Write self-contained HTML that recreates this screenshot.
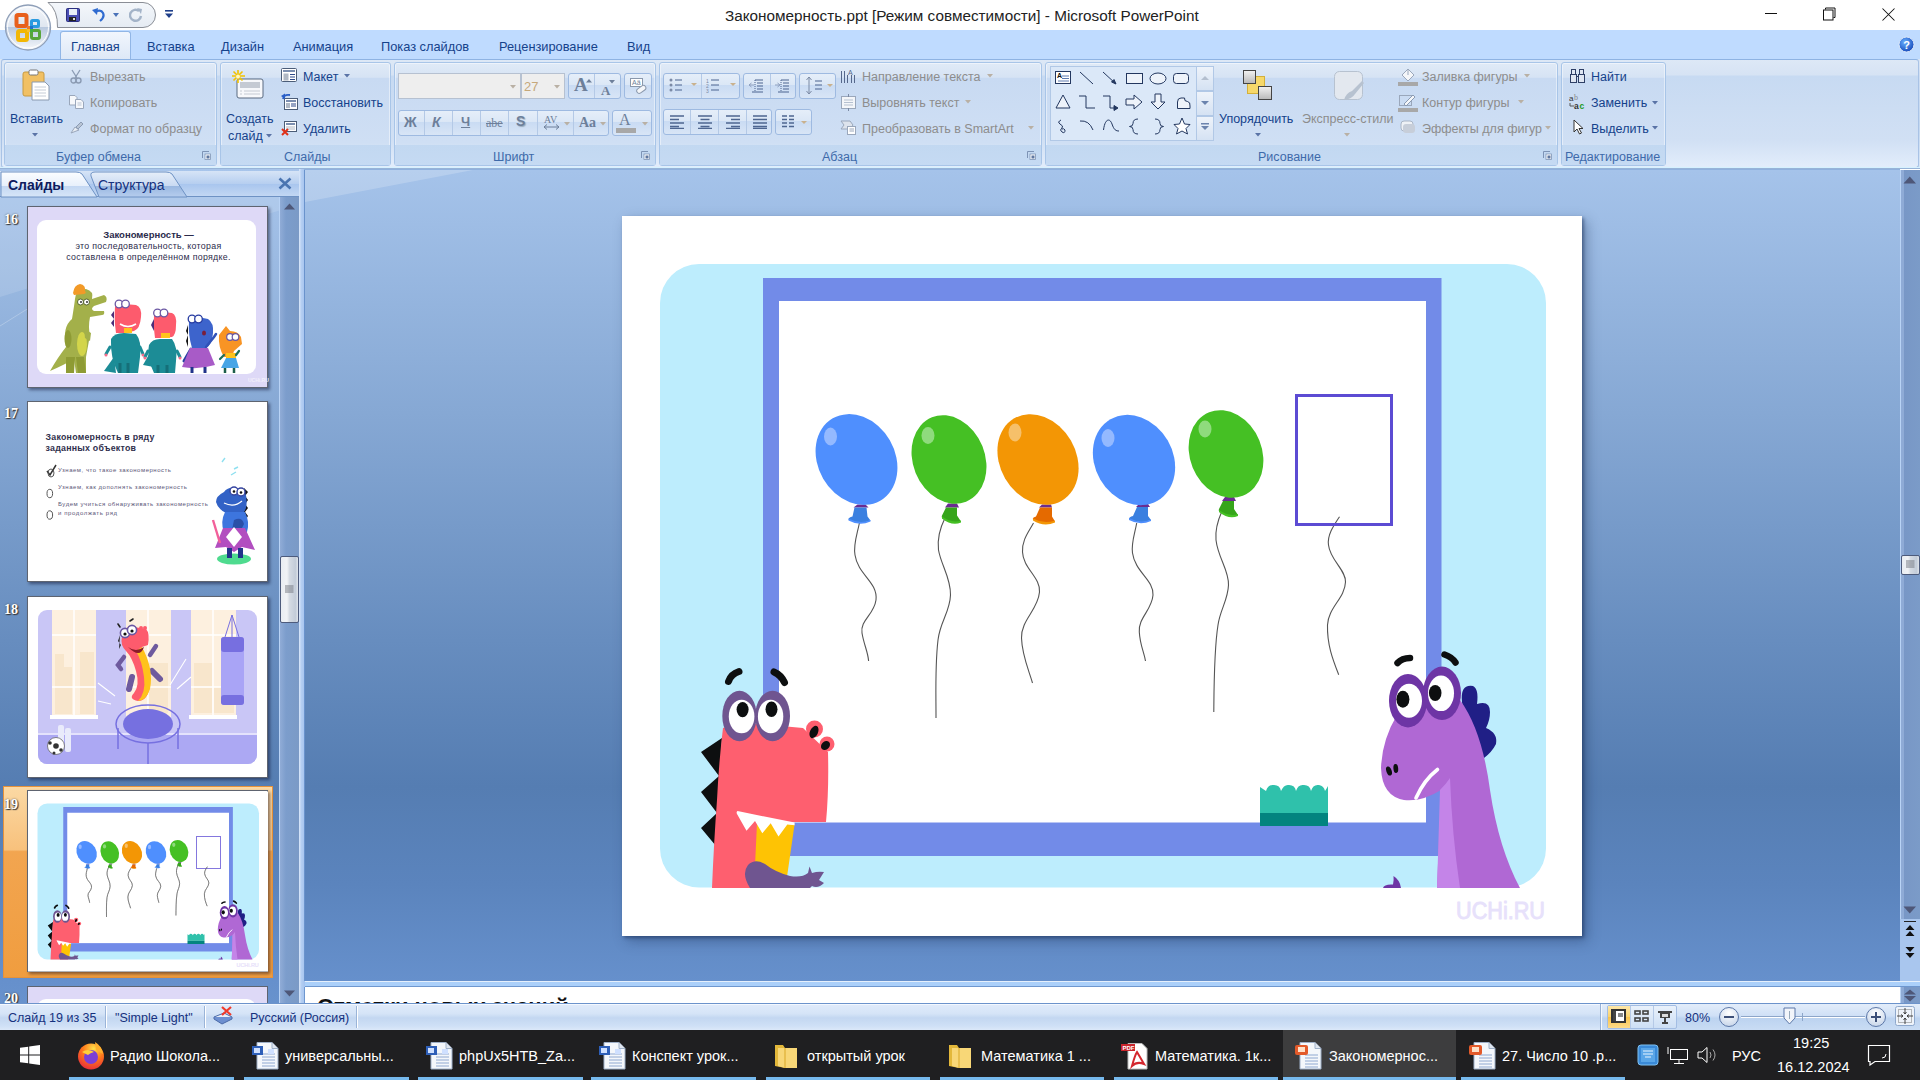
<!DOCTYPE html>
<html><head><meta charset="utf-8">
<style>
*{margin:0;padding:0;box-sizing:border-box}
html,body{width:1920px;height:1080px;overflow:hidden;background:#fff;font-family:"Liberation Sans",sans-serif}
.a{position:absolute}
.t{white-space:nowrap;line-height:17px}
.tab{font-size:12.8px;color:#15428b;top:38px}
.grp{top:62px;height:104px;border:1px solid #a8c5e8;border-radius:3px;background:linear-gradient(180deg,#e0eaf7 0,#d6e3f4 14%,#c8daf2 15%,#cfdff4 78%,#e4eefb 100%);box-shadow:inset 0 0 0 1px rgba(255,255,255,.45)}
.grp .lbl{position:absolute;left:0;right:0;bottom:0;height:20px;background:linear-gradient(#c2d8f1,#c5daf3)}
.gl{font-size:12.5px;color:#3e6aaa;padding-top:1px}
.bt{font-size:12.5px;color:#15428b;padding-top:1px}
.dt{font-size:12.5px;color:#8d8d8d;padding-top:1px}
.ar path{fill:#5a73a6}
.arg path{fill:#b9b0a4}
.strip{border:1px solid #9ebae1;border-radius:3px;background:linear-gradient(180deg,#e5eef9 0,#dbe7f6 45%,#c9dbf3 46%,#d8e5f6 100%)}
.sep{width:1px;background:#b4c9e6}
.fi{color:#6d7f9a}
.num{font-family:"Liberation Serif",serif;font-weight:bold;font-size:14px;color:#fff;text-shadow:1px 1px 1px #333,0 0 2px #555}
.thumb{border:1px solid #5e6470;box-shadow:2px 2px 3px rgba(0,0,30,.45)}
.st{font-size:12.5px;color:#15317e}
.sbsep{top:1006px;width:2px;height:22px;border-left:1px solid #9ab4d8;border-right:1px solid #fff}
.tbu{top:1077px;height:3px;background:#76b9ed}
.tbt{top:1048px;font-size:14.5px;color:#fff;line-height:17px}
</style></head><body>
<!-- TITLE BAR -->
<div class="a" style="left:0;top:0;width:1920px;height:30px;background:#fff"></div>
<!-- QAT pill -->
<svg class="a" style="left:0;top:0" width="200" height="30"><defs><linearGradient id="qg" x1="0" y1="0" x2="0" y2="1"><stop offset="0" stop-color="#f4f7fb"/><stop offset="1" stop-color="#e5ebf3"/></linearGradient></defs><path d="M48 2.5 H143 A12.5 12.5 0 0 1 143 27.5 H57.5 Q58 10 48 2.5Z" fill="url(#qg)" stroke="#8a8e96"/></svg>
<!-- save -->
<svg class="a" style="left:66px;top:8px" width="14" height="14"><rect x="0.5" y="0.5" width="13" height="13" rx="1" fill="#4a4fb5" stroke="#2b2f7e"/><rect x="3" y="1" width="8" height="6" fill="#e8eef8"/><rect x="3" y="9" width="7" height="4" fill="#222"/><rect x="7" y="10" width="2" height="2" fill="#ddd"/></svg>
<!-- undo -->
<svg class="a" style="left:92px;top:7px" width="14" height="16"><path d="M3 5 Q9 2 11 6 Q13 10 8 14" fill="none" stroke="#2f6bd0" stroke-width="2.2"/><path d="M0 3 L6 1 L5 8 Z" fill="#2f6bd0"/></svg>
<svg class="a" style="left:113px;top:13px" width="7" height="4"><path d="M0 0 H6 L3 4Z" fill="#4a72b8"/></svg>
<!-- redo disabled -->
<svg class="a" style="left:129px;top:8px" width="14" height="14"><path d="M10 3 A5.5 5.5 0 1 0 12 8" fill="none" stroke="#a3b3c8" stroke-width="2.4"/><path d="M8 0 L13 1 L12 6Z" fill="#a3b3c8"/></svg>
<!-- customize -->
<svg class="a" style="left:164px;top:10px" width="10" height="10"><rect x="1" y="0" width="8" height="1.6" fill="#1f3f8a"/><path d="M1 3.5 H9 L5 8Z" fill="#1f3f8a"/></svg>
<div class="a t" style="left:725px;top:7px;font-size:15.3px;color:#222">Закономерность.ppt [Режим совместимости] - Microsoft PowerPoint</div>
<!-- window controls -->
<div class="a" style="left:1765px;top:13px;width:12px;height:1px;background:#111"></div>
<svg class="a" style="left:1821px;top:6px" width="16" height="16"><rect x="2.5" y="4" width="9.5" height="10" fill="none" stroke="#111"/><path d="M4.5 3.5 V2 H14 V11.5 H12.5" fill="none" stroke="#111"/></svg>
<svg class="a" style="left:1881px;top:7px" width="16" height="16"><path d="M1.5 1.5 L13.5 13.5 M13.5 1.5 L1.5 13.5" stroke="#111" stroke-width="1.05"/></svg>
<!-- TABS ROW -->
<div class="a" style="left:0;top:30px;width:1920px;height:30px;background:#bfdbff"></div>
<div class="a" style="left:60px;top:31px;width:71px;height:30px;background:linear-gradient(#f1f6fd,#dce7f6);border:1px solid #91b6e6;border-bottom:none;border-radius:3px 3px 0 0"></div>
<div class="a t tab" style="left:71px;top:38px">Главная</div>
<div class="a t tab" style="left:147px;top:38px">Вставка</div>
<div class="a t tab" style="left:221px;top:38px">Дизайн</div>
<div class="a t tab" style="left:293px;top:38px">Анимация</div>
<div class="a t tab" style="left:381px;top:38px">Показ слайдов</div>
<div class="a t tab" style="left:499px;top:38px">Рецензирование</div>
<div class="a t tab" style="left:627px;top:38px">Вид</div>
<svg class="a" style="left:1898px;top:36px" width="17" height="17"><defs><radialGradient id="hg" cx="40%" cy="35%" r="70%"><stop offset="0" stop-color="#6ab0ff"/><stop offset="1" stop-color="#1346b8"/></radialGradient></defs><circle cx="8.5" cy="8.5" r="7.5" fill="url(#hg)" stroke="#dde8f8"/><text x="8.5" y="12.5" font-size="11" font-weight="bold" text-anchor="middle" fill="#fff" font-family="Liberation Sans">?</text></svg>
<!-- OFFICE BUTTON -->
<svg class="a" style="left:3px;top:3px" width="50" height="50">
<defs><linearGradient id="ob" x1="0" y1="0" x2="0" y2="1"><stop offset="0" stop-color="#f4f7fb"/><stop offset=".48" stop-color="#dfe6f0"/><stop offset=".5" stop-color="#b9c9df"/><stop offset="1" stop-color="#f7f9fc"/></linearGradient></defs>
<circle cx="25" cy="24.5" r="22.5" fill="url(#ob)" stroke="#8f9fb8" stroke-width="1.3"/>
<circle cx="25" cy="24.5" r="20.5" fill="none" stroke="#fff" stroke-width="1"/>
<rect x="13.5" y="12" width="10" height="11" rx="1.5" fill="none" stroke="#e8601c" stroke-width="4"/>
<rect x="28.5" y="17.5" width="7" height="6" rx="1" fill="none" stroke="#2b9be0" stroke-width="3"/>
<rect x="15" y="28" width="9" height="9" rx="1.5" fill="none" stroke="#f2b705" stroke-width="4"/>
<rect x="28.5" y="27.5" width="8" height="8" rx="1.5" fill="none" stroke="#58a53a" stroke-width="3"/>
<rect x="24" y="23" width="3" height="3" fill="#f07a2a"/><rect x="27" y="23" width="3" height="3" fill="#2070d0"/><rect x="24" y="26" width="3" height="3" fill="#f5c030"/><rect x="27" y="26" width="3" height="3" fill="#40b040"/>
</svg>
<!-- RIBBON -->
<div class="a" style="left:0;top:59px;width:1920px;height:110px;background:linear-gradient(#dbe6f5,#d0def2 15%,#c4d8f0 60%,#d9e6f6 100%)"></div>
<div class="a" style="left:1px;top:59px;width:1918px;height:109px;border:1px solid #a9c3e6;border-top-color:#8eb3e3;border-radius:3px;background:linear-gradient(180deg,#dde8f6 0,#d6e3f4 14%,#c7daf2 15%,#d1e0f4 75%,#e2edfb 100%)"></div>
<div class="a" style="left:0;top:167px;width:1920px;height:1px;background:#d5f1ff"></div>
<div class="a" style="left:0;top:168px;width:1920px;height:1px;background:#98b3d7"></div>
<!-- groups -->
<div class="a grp" style="left:4px;width:213px"><div class="lbl"></div></div>
<div class="a grp" style="left:220px;width:171px"><div class="lbl"></div></div>
<div class="a grp" style="left:394px;width:262px"><div class="lbl"></div></div>
<div class="a grp" style="left:659px;width:383px"><div class="lbl"></div></div>
<div class="a grp" style="left:1045px;width:513px"><div class="lbl"></div></div>
<div class="a grp" style="left:1561px;width:105px"><div class="lbl"></div></div>
<div class="a t gl" style="left:56px;top:148px">Буфер обмена</div>
<div class="a t gl" style="left:284px;top:148px">Слайды</div>
<div class="a t gl" style="left:493px;top:148px">Шрифт</div>
<div class="a t gl" style="left:822px;top:148px">Абзац</div>
<div class="a t gl" style="left:1258px;top:148px">Рисование</div>
<div class="a t gl" style="left:1565px;top:148px">Редактирование</div>
<!-- launchers -->
<svg class="a" style="left:202px;top:151px" width="9" height="9"><path d="M0.5 7 V0.5 H7" fill="none" stroke="#7d93b5"/><rect x="3" y="3" width="5.5" height="5.5" fill="#fff" stroke="#7d93b5" stroke-width=".8"/><rect x="4.5" y="4.5" width="3" height="3" fill="#5f77a0"/></svg>
<svg class="a" style="left:641px;top:151px" width="9" height="9"><path d="M0.5 7 V0.5 H7" fill="none" stroke="#7d93b5"/><rect x="3" y="3" width="5.5" height="5.5" fill="#fff" stroke="#7d93b5" stroke-width=".8"/><rect x="4.5" y="4.5" width="3" height="3" fill="#5f77a0"/></svg>
<svg class="a" style="left:1027px;top:151px" width="9" height="9"><path d="M0.5 7 V0.5 H7" fill="none" stroke="#7d93b5"/><rect x="3" y="3" width="5.5" height="5.5" fill="#fff" stroke="#7d93b5" stroke-width=".8"/><rect x="4.5" y="4.5" width="3" height="3" fill="#5f77a0"/></svg>
<svg class="a" style="left:1543px;top:151px" width="9" height="9"><path d="M0.5 7 V0.5 H7" fill="none" stroke="#7d93b5"/><rect x="3" y="3" width="5.5" height="5.5" fill="#fff" stroke="#7d93b5" stroke-width=".8"/><rect x="4.5" y="4.5" width="3" height="3" fill="#5f77a0"/></svg>

<!-- CLIPBOARD -->
<svg class="a" style="left:22px;top:69px" width="28" height="33"><rect x="1" y="3" width="21" height="24" rx="2" fill="#f1c063" stroke="#c89a40"/><rect x="7" y="1" width="9" height="5" rx="1.5" fill="#fff" stroke="#777"/><path d="M10 13 H23 L27 17 V31 H10 Z" fill="#fff" stroke="#8a9ab0"/><path d="M12.5 18 H24 M12.5 21 H24 M12.5 24 H24 M12.5 27 H24" stroke="#c5ccd6"/></svg>
<div class="a t bt" style="left:10px;top:110px">Вставить</div>
<svg class="a ar" style="left:32px;top:133px" width="6" height="4"><path d="M0 0 H6 L3 3.5Z"/></svg>
<svg class="a" style="left:70px;top:69px" width="12" height="15"><path d="M2 1 L7 9 M10 1 L5 9" stroke="#8b9bb3" stroke-width="1.3"/><circle cx="3.5" cy="11.5" r="2.5" fill="none" stroke="#8b9bb3" stroke-width="1.4"/><circle cx="8.5" cy="11.5" r="2.5" fill="none" stroke="#8b9bb3" stroke-width="1.4"/></svg>
<div class="a t dt" style="left:90px;top:68px">Вырезать</div>
<svg class="a" style="left:69px;top:95px" width="16" height="14"><path d="M0.5 0.5 H6 L8 2.5 V10 H0.5Z" fill="#f6f8fb" stroke="#9aa7bb"/><path d="M6.5 4.5 H12 L14.5 7 V13.5 H6.5Z" fill="#f6f8fb" stroke="#9aa7bb"/><path d="M8.5 8 H12.5 M8.5 10 H12.5" stroke="#b9c3d2"/></svg>
<div class="a t dt" style="left:90px;top:94px">Копировать</div>
<svg class="a" style="left:69px;top:120px" width="16" height="15"><path d="M2 13 L6 7 L10 10 Z" fill="#e8edf3" stroke="#9aa7bb"/><path d="M7 7 L12 2 L14 4 L9 9Z" fill="#b8c4d4" stroke="#8b9bb3"/></svg>
<div class="a t dt" style="left:90px;top:120px">Формат по образцу</div>

<!-- SLIDES -->
<svg class="a" style="left:232px;top:70px" width="34" height="30"><rect x="5" y="9" width="26" height="19" rx="2" fill="#f7f8fb" stroke="#5a6a80"/><rect x="8" y="12" width="20" height="6" fill="#c5cad3"/><path d="M8 21 H10 M12 21 H28 M8 24 H10 M12 24 H28" stroke="#c5cad3"/><g stroke="#f1c100" stroke-width="1.6"><path d="M6 0 V13 M0 6 H13 M1.5 1.5 L10.5 10.5 M10.5 1.5 L1.5 10.5"/></g><circle cx="6" cy="6.5" r="2" fill="#fff8c0"/></svg>
<div class="a t bt" style="left:226px;top:110px">Создать</div>
<div class="a t bt" style="left:228px;top:127px">слайд</div>
<svg class="a ar" style="left:266px;top:134px" width="6" height="4"><path d="M0 0 H6 L3 3.5Z"/></svg>
<svg class="a" style="left:281px;top:68px" width="17" height="15"><rect x="0.5" y="0.5" width="15" height="13" rx="1" fill="#fff" stroke="#4b5d78"/><rect x="2" y="2" width="12" height="2" fill="#7c8fb0"/><rect x="2.5" y="5.5" width="5" height="7" fill="#b0b8c4"/><path d="M9 6.5 H14 M9 9 H14 M9 11.5 H14" stroke="#2f4b8a" stroke-width="1.2"/></svg>
<div class="a t bt" style="left:303px;top:68px">Макет</div>
<svg class="a ar" style="left:344px;top:74px" width="6" height="4"><path d="M0 0 H6 L3 3.5Z"/></svg>
<svg class="a" style="left:281px;top:93px" width="18" height="18"><rect x="3.5" y="5.5" width="13" height="11" fill="#fff" stroke="#4b5d78"/><rect x="5" y="7" width="10" height="2" fill="#7c8fb0"/><rect x="5" y="10" width="4" height="5" fill="#b0b8c4"/><path d="M10 11 H15 M10 13 H15" stroke="#2f4b8a"/><path d="M2 6 Q3 1 9 2" fill="none" stroke="#2a5fc8" stroke-width="1.8"/><path d="M0 3 L4 0.5 L4 6Z" fill="#2a5fc8"/></svg>
<div class="a t bt" style="left:303px;top:94px">Восстановить</div>
<svg class="a" style="left:281px;top:120px" width="17" height="16"><rect x="3.5" y="1.5" width="12" height="10" fill="#fff" stroke="#4b5d78"/><rect x="5" y="3" width="9" height="2" fill="#7c8fb0"/><path d="M5 7 H14 M5 9 H14" stroke="#b0b8c4"/><path d="M1 9 L7 15 M7 9 L1 15" stroke="#e03018" stroke-width="2"/></svg>
<div class="a t bt" style="left:303px;top:120px">Удалить</div>

<!-- FONT -->
<div class="a" style="left:398px;top:73px;width:123px;height:26px;background:#eeeeee;border:1px solid #b6c1d1"></div>
<svg class="a arg" style="left:510px;top:85px" width="6" height="4"><path d="M0 0 H6 L3 3.5Z"/></svg>
<div class="a" style="left:521px;top:73px;width:44px;height:26px;background:#eeeeee;border:1px solid #b6c1d1"></div>
<div class="a t" style="left:524px;top:78px;font-size:13px;color:#c6a87a">27</div>
<svg class="a arg" style="left:554px;top:85px" width="6" height="4"><path d="M0 0 H6 L3 3.5Z"/></svg>
<div class="a strip" style="left:568px;top:73px;width:53px;height:26px"></div>
<div class="a sep" style="left:594px;top:74px;height:24px"></div>
<div class="a t" style="left:574px;top:76px;font-family:'Liberation Serif';font-size:19px;color:#6d7f9a;font-weight:bold">A</div>
<svg class="a" style="left:586px;top:79px" width="6" height="4"><path d="M0 3.5 H6 L3 0Z" fill="#6d7f9a"/></svg>
<div class="a t" style="left:601px;top:82px;font-family:'Liberation Serif';font-size:13px;color:#6d7f9a;font-weight:bold">A</div>
<svg class="a" style="left:609px;top:80px" width="6" height="4"><path d="M0 0 H6 L3 3.5Z" fill="#6d7f9a"/></svg>
<div class="a strip" style="left:624px;top:73px;width:28px;height:26px"></div>
<svg class="a" style="left:630px;top:77px" width="18" height="18"><rect x="0.5" y="1.5" width="12" height="8" fill="#fff" stroke="#8a98ac"/><text x="2" y="8" font-size="7" fill="#6d7f9a" font-family="Liberation Sans">Aä</text><rect x="6" y="10" width="10" height="5" rx="2.5" transform="rotate(-35 11 12)" fill="#f4f6f9" stroke="#8a98ac"/></svg>
<div class="a strip" style="left:398px;top:110px;width:211px;height:26px"></div>
<div class="a sep" style="left:424px;top:111px;height:24px"></div>
<div class="a sep" style="left:452px;top:111px;height:24px"></div>
<div class="a sep" style="left:480px;top:111px;height:24px"></div>
<div class="a sep" style="left:508px;top:111px;height:24px"></div>
<div class="a sep" style="left:537px;top:111px;height:24px"></div>
<div class="a sep" style="left:573px;top:111px;height:24px"></div>
<div class="a t fi" style="left:404px;top:114px;font-weight:bold;font-size:14px">Ж</div>
<div class="a t fi" style="left:432px;top:114px;font-weight:bold;font-style:italic;font-size:14px">К</div>
<div class="a t fi" style="left:461px;top:113px;font-weight:bold;font-size:13px;text-decoration:underline">Ч</div>
<div class="a t fi" style="left:486px;top:115px;font-size:12px;text-decoration:line-through;font-family:'Liberation Serif'">abe</div>
<div class="a t fi" style="left:516px;top:113px;font-weight:bold;font-size:14px;text-shadow:1px 1px 1px #9ab">S</div>
<div class="a t fi" style="left:544px;top:111px;font-size:10px;font-family:'Liberation Serif'">AV</div>
<svg class="a" style="left:543px;top:124px" width="17" height="6"><path d="M1 3 H16 M1 3 L4 0.5 M1 3 L4 5.5 M16 3 L13 0.5 M16 3 L13 5.5" stroke="#6d7f9a" fill="none"/></svg>
<svg class="a arg" style="left:564px;top:122px" width="6" height="4"><path d="M0 0 H6 L3 3.5Z"/></svg>
<div class="a t fi" style="left:579px;top:114px;font-size:14px;font-family:'Liberation Serif';font-weight:bold">Aa</div>
<svg class="a arg" style="left:600px;top:122px" width="6" height="4"><path d="M0 0 H6 L3 3.5Z"/></svg>
<div class="a strip" style="left:612px;top:110px;width:40px;height:26px"></div>
<div class="a t fi" style="left:619px;top:111px;font-size:16px;font-family:'Liberation Serif'">A</div>
<div class="a" style="left:616px;top:128px;width:20px;height:5px;background:#a8a8a8"></div>
<svg class="a arg" style="left:642px;top:122px" width="6" height="4"><path d="M0 0 H6 L3 3.5Z"/></svg>

<!-- PARAGRAPH -->
<div class="a strip" style="left:663px;top:73px;width:77px;height:26px"></div>
<div class="a sep" style="left:701px;top:74px;height:24px"></div>
<svg class="a" style="left:669px;top:78px" width="30" height="16"><g fill="#7b8aa5"><circle cx="2" cy="2" r="1.5"/><circle cx="2" cy="7" r="1.5"/><circle cx="2" cy="12" r="1.5"/></g><path d="M6 2 H13 M6 7 H13 M6 12 H13" stroke="#4d6590" stroke-width="1.2"/><path d="M22 5 H28 L25 8Z" fill="#c9b18e"/></svg>
<svg class="a" style="left:706px;top:78px" width="30" height="16"><text x="0" y="5" font-size="5" fill="#7b8aa5">1</text><text x="0" y="10" font-size="5" fill="#7b8aa5">2</text><text x="0" y="15" font-size="5" fill="#7b8aa5">3</text><path d="M5 2 H13 M5 7 H13 M5 12 H13" stroke="#4d6590" stroke-width="1.2"/><path d="M24 5 H30 L27 8Z" fill="#c9b18e"/></svg>
<div class="a strip" style="left:743px;top:73px;width:53px;height:26px"></div>
<div class="a sep" style="left:770px;top:74px;height:24px"></div>
<svg class="a" style="left:748px;top:78px" width="18" height="16"><path d="M7 2 H15 M9 5 H15 M9 8 H15 M9 11 H15 M4 14 H15" stroke="#4d6590" stroke-width="1.2"/><path d="M7 2 V14" stroke="#4d6590" stroke-dasharray="1 1"/><path d="M1 7 H6 M1 7 L3.5 5 M1 7 L3.5 9" stroke="#8ea0c0" fill="none"/></svg>
<svg class="a" style="left:774px;top:78px" width="18" height="16"><path d="M7 2 H15 M9 5 H15 M9 8 H15 M9 11 H15 M4 14 H15" stroke="#4d6590" stroke-width="1.2"/><path d="M7 2 V14" stroke="#4d6590" stroke-dasharray="1 1"/><path d="M1 7 H6 M6 7 L3.5 5 M6 7 L3.5 9" stroke="#8ea0c0" fill="none"/></svg>
<div class="a strip" style="left:799px;top:73px;width:37px;height:26px"></div>
<svg class="a" style="left:806px;top:76px" width="28" height="20"><path d="M3 1 V18 M3 1 L0.5 4 M3 1 L5.5 4 M3 18 L0.5 15 M3 18 L5.5 15" stroke="#7b8aa5" fill="none"/><path d="M9 5 H16 M9 9 H16 M9 13 H16" stroke="#4d6590" stroke-width="1.2"/><path d="M21 8 H27 L24 11Z" fill="#c9b18e"/></svg>
<div class="a strip" style="left:663px;top:109px;width:109px;height:26px"></div>
<div class="a sep" style="left:690px;top:110px;height:24px"></div>
<div class="a sep" style="left:718px;top:110px;height:24px"></div>
<div class="a sep" style="left:746px;top:110px;height:24px"></div>
<svg class="a" style="left:669px;top:115px" width="16" height="14"><path d="M1 1 H15 M1 4.5 H10 M1 8 H15 M1 11.5 H10 M1 13.5 H15" stroke="#4d6590" stroke-width="1.3"/></svg>
<svg class="a" style="left:697px;top:115px" width="16" height="14"><path d="M1 1 H15 M3.5 4.5 H12.5 M1 8 H15 M3.5 11.5 H12.5 M1 13.5 H15" stroke="#4d6590" stroke-width="1.3"/></svg>
<svg class="a" style="left:725px;top:115px" width="16" height="14"><path d="M1 1 H15 M6 4.5 H15 M1 8 H15 M6 11.5 H15 M1 13.5 H15" stroke="#4d6590" stroke-width="1.3"/></svg>
<svg class="a" style="left:752px;top:115px" width="16" height="14"><path d="M1 1 H15 M1 4.5 H15 M1 8 H15 M1 11.5 H15 M1 13.5 H15" stroke="#4d6590" stroke-width="1.3"/></svg>
<div class="a strip" style="left:775px;top:109px;width:37px;height:26px"></div>
<svg class="a" style="left:781px;top:115px" width="28" height="14"><path d="M1 1 H6 M1 4.5 H6 M1 8 H6 M1 11.5 H6 M8 1 H13 M8 4.5 H13 M8 8 H13 M8 11.5 H13" stroke="#4d6590" stroke-width="1.4"/><path d="M20 6 H26 L23 9Z" fill="#c9b18e"/></svg>
<svg class="a" style="left:840px;top:68px" width="17" height="16"><path d="M1.5 3 V15 M4.5 3 V15 M7.5 7 V15 M11.5 7 V15 M14.5 7 V15" stroke="#55678a"/><text x="8" y="7" font-size="7" fill="#55678a">A</text></svg>
<div class="a t dt" style="left:862px;top:68px">Направление текста</div>
<svg class="a arg" style="left:987px;top:74px" width="6" height="4"><path d="M0 0 H6 L3 3.5Z"/></svg>
<svg class="a" style="left:840px;top:94px" width="17" height="17"><rect x="1.5" y="2.5" width="14" height="12" fill="#f4f6f9" stroke="#9aa7bb"/><path d="M4 6 H13 M4 8.5 H13 M4 11 H13" stroke="#b5c0d0"/><path d="M8.5 0 V3 M8.5 14 V17" stroke="#7b8aa5"/></svg>
<div class="a t dt" style="left:862px;top:94px">Выровнять текст</div>
<svg class="a arg" style="left:965px;top:100px" width="6" height="4"><path d="M0 0 H6 L3 3.5Z"/></svg>
<svg class="a" style="left:840px;top:119px" width="17" height="17"><path d="M1 2 H10 L13 6 L10 10 H1 L4 6Z" fill="#dde3ec" stroke="#9aa7bb"/><rect x="7.5" y="7.5" width="8" height="8" fill="#fff" stroke="#9aa7bb"/><path d="M9.5 10 H14 M9.5 12 H14" stroke="#9aa7bb"/></svg>
<div class="a t dt" style="left:862px;top:120px">Преобразовать в SmartArt</div>
<svg class="a arg" style="left:1028px;top:126px" width="6" height="4"><path d="M0 0 H6 L3 3.5Z"/></svg>

<!-- DRAWING -->
<div class="a" style="left:1050px;top:66px;width:147px;height:75px;background:#dbe8f8;border:1px solid #b1c8e6"></div>
<div class="a" style="left:1196px;top:66px;width:18px;height:25px;background:linear-gradient(#eef3fa,#d5e2f3);border:1px solid #b1c8e6"></div>
<div class="a" style="left:1196px;top:91px;width:18px;height:25px;background:linear-gradient(#eef3fa,#d5e2f3);border:1px solid #b1c8e6"></div>
<div class="a" style="left:1196px;top:116px;width:18px;height:25px;background:linear-gradient(#eef3fa,#d5e2f3);border:1px solid #b1c8e6"></div>
<svg class="a" style="left:1201px;top:76px" width="8" height="5"><path d="M0 4 H8 L4 0Z" fill="#b4bfcf"/></svg>
<svg class="a" style="left:1201px;top:101px" width="8" height="5"><path d="M0 0 H8 L4 4Z" fill="#6b83ad"/></svg>
<svg class="a" style="left:1201px;top:123px" width="8" height="8"><rect x="0" y="0" width="8" height="1.5" fill="#6b83ad"/><path d="M0 3 H8 L4 7Z" fill="#6b83ad"/></svg>
<svg class="a" style="left:1052px;top:68px" width="144" height="72" fill="none" stroke="#23375f" stroke-width="1">
<rect x="3.5" y="3.5" width="15" height="12" fill="#fff"/><text x="5" y="10" font-size="7" font-weight="bold" fill="#111" stroke="none">A</text><path d="M10 8 H17 M10 10.5 H17 M6 13 H17" stroke="#5d7bb0"/>
<path d="M28 4 L41 16"/>
<path d="M51 4 L64 16"/><path d="M64 16 L59.5 14 L62 11.5Z" fill="#23375f"/>
<rect x="74.5" y="5.5" width="16" height="10" fill="#eef3fa"/>
<ellipse cx="106" cy="10.5" rx="8" ry="5.5" fill="#eef3fa"/>
<rect x="121.5" y="5.5" width="15" height="10" rx="3" fill="#eef3fa"/>
<path d="M4 40 L11 27 L18 40Z" fill="#eef3fa"/>
<path d="M27 28 H34 V40 H43"/>
<path d="M51 28 H58 V40 H65"/><path d="M66 40 L62 37.5 V42.5Z" fill="#23375f"/>
<path d="M74 31 H82 V27 L90 34 L82 41 V37 H74Z" fill="#eef3fa"/>
<path d="M103 26 V34 H99 L106 41 L113 34 H109 V26Z" fill="#eef3fa"/>
<path d="M125.5 40.5 V34 Q125.5 30 129 30 L132.5 30 Q132 33.5 135.5 33.5 Q138.5 34 138 38 V40.5Z" fill="#eef3fa"/>
<path d="M9 52 Q5 54 8 56 Q12 58 10 60 Q7 62 10 64 Q13 66 13 62 Q12 60 10 61"/>
<path d="M28 53 Q37 52 41 62"/>
<path d="M51.5 62 C53 50 58 50 60 56 C62 62 64 63 67 63"/>
<path d="M86 51 Q81 51 81 55.5 Q81 58.5 77.5 58.5 Q81 58.5 81 61.5 Q81 66 86 66"/>
<path d="M103 51 Q108 51 108 55.5 Q108 58.5 111.5 58.5 Q108 58.5 108 61.5 Q108 66 103 66"/>
<path d="M130 50 L132.5 56 L138 56.5 L134 60.5 L135.5 66 L130 63 L124.5 66 L126 60.5 L122 56.5 L127.5 56Z" fill="#fff"/>
</svg>
<svg class="a" style="left:1240px;top:69px" width="34" height="34"><defs><linearGradient id="gy" x1="0" y1="0" x2="0" y2="1"><stop offset="0" stop-color="#f2f2f2"/><stop offset="1" stop-color="#b8b8b8"/></linearGradient></defs><rect x="7.5" y="7.5" width="17" height="17" fill="#f6d86a" stroke="#d4b03a"/><rect x="3.5" y="1.5" width="12" height="13" fill="url(#gy)" stroke="#444"/><rect x="18.5" y="17.5" width="13" height="13" fill="url(#gy)" stroke="#444"/></svg>
<div class="a t bt" style="left:1219px;top:110px">Упорядочить</div>
<svg class="a ar" style="left:1255px;top:133px" width="6" height="4"><path d="M0 0 H6 L3 3.5Z"/></svg>
<svg class="a" style="left:1332px;top:69px" width="34" height="34"><rect x="2.5" y="2.5" width="28" height="28" rx="5" fill="#e3e8ef" stroke="#b7c2d0"/><path d="M12 31 Q14 24 20 22 L30 12 L32 14 L23 25 Q20 30 12 31Z" fill="#b7c2d0"/></svg>
<div class="a t dt" style="left:1302px;top:110px">Экспресс-стили</div>
<svg class="a arg" style="left:1344px;top:133px" width="6" height="4"><path d="M0 0 H6 L3 3.5Z"/></svg>
<svg class="a" style="left:1398px;top:67px" width="20" height="20"><path d="M4 8 L10 2 L16 8 L10 14Z" fill="#f4f6f9" stroke="#9aa7bb"/><path d="M10 2 V8" stroke="#9aa7bb"/><rect x="0" y="15" width="20" height="4" fill="#a8a8a8"/></svg>
<div class="a t dt" style="left:1422px;top:68px">Заливка фигуры</div>
<svg class="a arg" style="left:1524px;top:74px" width="6" height="4"><path d="M0 0 H6 L3 3.5Z"/></svg>
<svg class="a" style="left:1398px;top:93px" width="20" height="20"><rect x="1.5" y="2.5" width="12" height="10" fill="none" stroke="#9aa7bb"/><path d="M6 11 L15 2 L17 4 L8 13Z" fill="#f4f6f9" stroke="#8b9bb3"/><rect x="0" y="15" width="20" height="4" fill="#a8a8a8"/></svg>
<div class="a t dt" style="left:1422px;top:94px">Контур фигуры</div>
<svg class="a arg" style="left:1518px;top:100px" width="6" height="4"><path d="M0 0 H6 L3 3.5Z"/></svg>
<svg class="a" style="left:1399px;top:120px" width="18" height="15"><rect x="2" y="1" width="12" height="10" rx="3" fill="#eef1f5" stroke="#a9b5c6"/><rect x="4" y="4" width="12" height="9" rx="3" fill="#c7ced9"/></svg>
<div class="a t dt" style="left:1422px;top:120px">Эффекты для фигур</div>
<svg class="a arg" style="left:1545px;top:126px" width="6" height="4"><path d="M0 0 H6 L3 3.5Z"/></svg>

<!-- EDITING -->
<svg class="a" style="left:1570px;top:68px" width="16" height="15"><g fill="#dfe6f2" stroke="#2e3f66"><rect x="0.5" y="6.5" width="6" height="8"/><rect x="8.5" y="6.5" width="6" height="8"/><rect x="1.5" y="1.5" width="4" height="5"/><rect x="9.5" y="1.5" width="4" height="5"/></g><path d="M6.5 8.5 H8.5" stroke="#2e3f66"/></svg>
<div class="a t bt" style="left:1591px;top:68px">Найти</div>
<svg class="a" style="left:1569px;top:93px" width="18" height="18"><text x="0" y="8" font-size="8" fill="#333" font-family="Liberation Sans">a</text><text x="5" y="7" font-size="8" fill="#888" font-family="Liberation Serif">b</text><text x="5" y="16" font-size="8.5" font-weight="bold" fill="#333" font-family="Liberation Sans">a</text><text x="10.5" y="16" font-size="8.5" font-weight="bold" fill="#1d9a1d" font-family="Liberation Sans">c</text><path d="M1 10 V13 H5" stroke="#555" fill="none"/></svg>
<div class="a t bt" style="left:1591px;top:94px">Заменить</div>
<svg class="a ar" style="left:1652px;top:101px" width="6" height="4"><path d="M0 0 H6 L3 3.5Z"/></svg>
<svg class="a" style="left:1573px;top:119px" width="11" height="16"><path d="M1 1 V13 L4 10 L6.5 15 L8.5 14 L6 9.5 H10Z" fill="#fff" stroke="#333"/></svg>
<div class="a t bt" style="left:1591px;top:120px">Выделить</div>
<svg class="a ar" style="left:1652px;top:126px" width="6" height="4"><path d="M0 0 H6 L3 3.5Z"/></svg>
<!-- LEFT PANE -->
<div class="a" style="left:0;top:169px;width:299px;height:834px;overflow:hidden;background:linear-gradient(180deg,#a8c5eb 0%,#86a8d4 29.3%,#678dbf 56.5%,#557db2 74%,#5b84bd 85.7%,#6690cc 97.4%,#6892cd 100%)">
  <svg class="a" style="left:0;top:28px" width="281" height="140"><path d="M0 0 H281 V13 L0 100Z" fill="rgba(255,255,255,.13)"/><path d="M0 129 L40 104" stroke="rgba(255,255,255,.25)"/></svg>
</div>
<div class="a" style="left:0;top:171px;width:299px;height:26px;background:linear-gradient(#d6e4f6,#b7cff0 50%,#a8c5ee 51%,#c2d7f3);border-bottom:1px solid #6e92c4"></div>
<svg class="a" style="left:0;top:171px" width="200" height="27">
<defs><linearGradient id="tg1" x1="0" y1="0" x2="0" y2="1"><stop offset="0" stop-color="#fbfdff"/><stop offset=".55" stop-color="#e8f0fb"/><stop offset=".56" stop-color="#c3d7f2"/><stop offset="1" stop-color="#d7e6f8"/></linearGradient>
<linearGradient id="tg2" x1="0" y1="0" x2="0" y2="1"><stop offset="0" stop-color="#e6eef9"/><stop offset=".55" stop-color="#c9daf2"/><stop offset=".56" stop-color="#99b7e0"/><stop offset="1" stop-color="#b6cdee"/></linearGradient></defs>
<path d="M187 26 L172 3 Q170 1 166 1 H95 Q90 1 91 5 L99 26Z" fill="url(#tg2)" stroke="#6e92c4"/>
<path d="M97 26 L82 3 Q80 1 76 1 H1 V26Z" fill="url(#tg1)" stroke="#6e92c4"/>
</svg>
<div class="a t" style="left:8px;top:177px;font-size:14px;font-weight:bold;color:#0f1c5e">Слайды</div>
<div class="a t" style="left:98px;top:177px;font-size:14px;color:#15317e">Структура</div>
<svg class="a" style="left:278px;top:177px" width="14" height="13"><path d="M1.5 1.5 L12.5 11.5 M12.5 1.5 L1.5 11.5" stroke="#4a74b0" stroke-width="2.6"/></svg>
<!-- pane scrollbar -->
<div class="a" style="left:279px;top:197px;width:20px;height:806px;background:linear-gradient(90deg,#b9d3f5 0,#b9d3f5 7%,#8fabd6 7%,#7c9dcc 35%,#7b9ac6 100%)"></div>
<svg class="a" style="left:284px;top:203px" width="12" height="7"><path d="M0 6.5 H11 L5.5 0.5Z" fill="#4e5778"/></svg>
<svg class="a" style="left:284px;top:990px" width="12" height="7"><path d="M0 0.5 H11 L5.5 6.5Z" fill="#4e5778"/></svg>
<div class="a" style="left:280px;top:556px;width:18.5px;height:67px;border:1px solid #4d5b7c;border-radius:2px;background:linear-gradient(90deg,#e9edf2 0,#f1f3f6 35%,#d5dbe3 50%,#c3ccd8 85%,#dfe4ea 100%)"></div>
<svg class="a" style="left:285px;top:585px" width="10" height="9"><path d="M0 1 H8.5 M0 3 H8.5 M0 5 H8.5 M0 7 H8.5" stroke="#6b6f78" stroke-width=".9"/></svg>
<div class="a" style="left:299px;top:169px;width:6px;height:834px;background:linear-gradient(90deg,#dbe8fa,#b4cef2 40%,#a4c3ef)"></div>

<!-- slide numbers -->
<div class="a t num" style="left:4px;top:211px">16</div>
<div class="a t num" style="left:4px;top:405px">17</div>
<div class="a t num" style="left:4px;top:601px">18</div>
<!-- selected 19 highlight -->
<div class="a" style="left:3px;top:786px;width:270px;height:192px;border:1px solid #e6923a;background:linear-gradient(180deg,#fbd9a4 0,#f8c17c 33%,#f2a550 34%,#f09d3f 100%)"></div>
<div class="a t num" style="left:4px;top:796px">19</div>
<div class="a t num" style="left:4px;top:990px">20</div>

<!-- THUMB 16 -->
<div class="a thumb" style="left:27px;top:206px;width:241px;height:182px;background:#ded9f7">
 <div class="a" style="left:9px;top:13px;width:219px;height:154px;background:#fff;border-radius:9px"></div>
 <div class="a t" style="left:0;top:19px;width:241px;text-align:center;font-size:9.5px;font-weight:bold;color:#2b2b4b">Закономерность —</div>
 <div class="a t" style="left:0;top:31px;width:241px;text-align:center;font-size:8.8px;color:#2b2b4b;letter-spacing:.3px">это последовательность, которая</div>
 <div class="a t" style="left:0;top:42px;width:241px;text-align:center;font-size:8.8px;color:#2b2b4b;letter-spacing:.3px">составлена в определённом порядке.</div>
 <svg class="a" style="left:0;top:0" width="241" height="182">
  <!-- croc -->
  <path d="M22 164 Q30 150 38 140 Q34 120 44 112 Q46 100 47 92 Q48 82 58 82 Q66 84 64 92 L76 88 Q80 90 78 95 L66 99 Q62 102 66 104 L76 104 Q77 108 74 108 L62 110 Q60 120 62 128 L58 150 L58 166 L48 166 L46 152 Q36 158 22 164Z" fill="#a3b04a"/>
  <path d="M38 150 L38 166 L46 166 L47 150Z M48 150 L50 166 L58 166 L56 150Z" fill="#8e9b34"/>
  <ellipse cx="54" cy="137" rx="5" ry="12" fill="#d3d54a"/>
  <ellipse cx="40" cy="132" rx="3.5" ry="9" fill="#8e9b34"/>
  <path d="M56 122 L63 126 L62 134 L57 131Z" fill="#a3b04a"/>
  <path d="M45 86 Q46 78 52 77 Q58 78 57 84 Q59 86 56 87 L46 88Z" fill="#f29a28"/>
  <circle cx="52.5" cy="95" r="3" fill="#fff" stroke="#4a5a20" stroke-width=".9"/><circle cx="58.5" cy="95" r="3" fill="#fff" stroke="#4a5a20" stroke-width=".9"/>
  <circle cx="53" cy="95" r="1" fill="#333"/><circle cx="59" cy="95" r="1" fill="#333"/>
  <!-- dino2 -->
  <path d="M76 164 L86 150 L88 166 Z" fill="#1c8c96"/>
  <path d="M83 132 Q86 126 96 126 L108 127 Q114 134 112 150 L110 166 L90 166 Q82 150 83 132Z" fill="#1c8c96"/>
  <path d="M82 140 L78 147 M112 140 L115 147" stroke="#1c8c96" stroke-width="3" stroke-linecap="round"/>
  <circle cx="78" cy="148" r="1.5" fill="#f76c8a"/><circle cx="115" cy="148" r="1.5" fill="#f76c8a"/>
  <path d="M92 156 V166 M100 156 V166" stroke="#156f78" stroke-width="3"/>
  <path d="M87 100 Q88 96 96 97 L108 98 Q114 100 113 110 Q112 122 106 124 L96 126 L88 126 Q86 112 87 100Z" fill="#fd5b6d"/>
  <path d="M86 104 L83 108 L86 112 L83 116 L86 120Z" fill="#4a2d7a"/>
  <path d="M92 117 Q100 122 108 117" fill="none" stroke="#fff" stroke-width="1.5"/>
  <rect x="96" y="121" width="8" height="5" fill="#ffc21b"/>
  <circle cx="91" cy="97" r="3.8" fill="#fff" stroke="#6a57a3" stroke-width="1.3"/><circle cx="97.5" cy="97" r="3.8" fill="#fff" stroke="#6a57a3" stroke-width="1.3"/>
  <!-- dino3 -->
  <path d="M115 158 Q120 150 124 140 L126 160Z" fill="#1c8c96"/>
  <path d="M121 138 Q124 132 132 132 L144 132 Q150 140 148 154 L147 166 L126 166 Q118 150 121 138Z" fill="#1c8c96"/>
  <path d="M120 144 L117 150 M149 144 L152 150" stroke="#1c8c96" stroke-width="3" stroke-linecap="round"/>
  <circle cx="117" cy="151" r="1.5" fill="#f76c8a"/><circle cx="152" cy="151" r="1.5" fill="#f76c8a"/>
  <path d="M130 158 V166 M139 158 V166" stroke="#156f78" stroke-width="3"/>
  <path d="M126 108 Q128 104 134 105 L144 106 Q149 108 148 118 Q148 128 144 130 L132 131 L127 131 Q125 120 126 108Z" fill="#fd5b6d"/>
  <path d="M126 112 L123 118 L126 124Z" fill="#4a2d7a"/>
  <rect x="133" y="126" width="9" height="5" fill="#ffc21b"/>
  <circle cx="129.5" cy="106" r="3.8" fill="#fff" stroke="#6a57a3" stroke-width="1.3"/><circle cx="136" cy="106" r="3.8" fill="#fff" stroke="#6a57a3" stroke-width="1.3"/>
  <!-- dino4 -->
  <path d="M161 114 Q162 108 170 110 L180 112 Q186 116 185 126 Q184 138 178 141 L164 141 Q160 128 161 114Z" fill="#3d64cc"/>
  <path d="M160 118 L158 124 L160 128 L158 134 L160 140Z" fill="#111"/>
  <path d="M178 140 L186 130 L188 127" stroke="#3052b8" stroke-width="2.5" stroke-linecap="round" fill="none"/>
  <path d="M163 142 L156 154" stroke="#2540a0" stroke-width="3" stroke-linecap="round"/>
  <path d="M154 160 L162 141 L180 141 L187 158 Q170 163 154 160Z" fill="#a85bc7"/>
  <path d="M164 160 V166 M177 160 V166" stroke="#21338a" stroke-width="3"/>
  <ellipse cx="176" cy="126" rx="2" ry="2.5" fill="#7a1f3a"/>
  <circle cx="164" cy="112" r="3.8" fill="#fff" stroke="#253aa0" stroke-width="1.3"/><circle cx="170.5" cy="112" r="3.8" fill="#fff" stroke="#253aa0" stroke-width="1.3"/>
  <!-- dino5 -->
  <path d="M191 128 L198 119 L202 124 Q210 124 213 130 L214 137 L206 144 L204 150 L196 150 Q190 140 191 128Z" fill="#f89424"/>
  <path d="M198 146 H208 V152 H198Z" fill="#ffc21b"/>
  <path d="M196 148 L192 152 M208 148 L211 144" stroke="#1e6e5a" stroke-width="2.2" stroke-linecap="round"/>
  <path d="M193 161 L198 151 L208 151 L211 161Z" fill="#48a5e6"/>
  <path d="M197 161 V166 M206 161 V166" stroke="#1e5e4a" stroke-width="2.5"/>
  <circle cx="202" cy="130" r="3.3" fill="#fff" stroke="#6a57a3" stroke-width="1.2"/><circle cx="207.5" cy="130" r="3.3" fill="#fff" stroke="#6a57a3" stroke-width="1.2"/>
  <text x="220" y="175" font-size="5" fill="#f2f0fb" font-family="Liberation Sans" font-weight="bold">UCHi.RU</text>
 </svg>
</div>

<!-- THUMB 17 -->
<div class="a thumb" style="left:27px;top:401px;width:241px;height:181px;background:#fff">
 <div class="a t" style="left:17.5px;top:30px;font-size:8.8px;font-weight:bold;color:#30304d;line-height:10.5px;letter-spacing:.25px">Закономерность в ряду<br>заданных объектов</div>
 <svg class="a" style="left:0;top:0" width="241" height="181">
  <path d="M19 69 L22 73 L28 63" fill="none" stroke="#333" stroke-width="1.5"/><ellipse cx="23" cy="71" rx="3" ry="4" fill="none" stroke="#555"/>
  <ellipse cx="21.8" cy="91.5" rx="2.8" ry="4.2" fill="none" stroke="#555"/>
  <ellipse cx="21.8" cy="113" rx="2.8" ry="4.2" fill="none" stroke="#555"/>
  <g font-family="Liberation Sans" font-size="6" fill="#5a5577"><text x="30" y="70" textLength="113" lengthAdjust="spacing">Узнаем, что такое закономерность</text><text x="30" y="87" textLength="129" lengthAdjust="spacing">Узнаем, как дополнять закономерность</text><text x="30" y="104" textLength="150" lengthAdjust="spacing">Будем учиться обнаруживать закономерность</text><text x="30" y="112.5" textLength="59" lengthAdjust="spacing">и продолжать ряд</text></g>
  <path d="M194 60 L197 56 M206 67 L210 65 M203 73 L208 70" stroke="#8fe0f0" stroke-width="1.4"/>
  <ellipse cx="206" cy="157" rx="17" ry="5.5" fill="#4fdb8f"/>
  <path d="M216 86 L220 90 L217 94 L220 98 L217 102 L220 106 L217 110 L220 114 L216 120Z" fill="#111"/>
  <path d="M196 90 Q200 84 210 86 L216 88 Q220 96 218 106 Q216 112 212 112 L200 112 Q190 108 188 100 Q188 94 196 90Z" fill="#3262c6"/>
  <path d="M196 101 Q206 106 214 99" fill="none" stroke="#fff" stroke-width="1.2"/>
  <path d="M197 110 H217 Q222 120 219 130 L196 130 Q192 120 197 110Z" fill="#3d75de"/>
  <path d="M206 118 Q214 114 216 122 L212 130 L204 128Z" fill="#2a50a8"/>
  <path d="M187 146 L195 126 L217 126 L227 148 L214 145 L206 150 L198 145Z" fill="#b24ec0"/>
  <path d="M206 125 L214 135 L206 145 L198 135Z" fill="#fff"/>
  <path d="M185 118 L192 141" stroke="#f2609a" stroke-width="2.4"/>
  <rect x="199" y="146" width="5" height="10" fill="#21338a"/><rect x="210" y="146" width="5" height="10" fill="#21338a"/>
  <circle cx="206" cy="89" r="4" fill="#fff" stroke="#3544a0" stroke-width="1.4"/><circle cx="213" cy="90" r="4" fill="#fff" stroke="#3544a0" stroke-width="1.4"/>
  <circle cx="206" cy="89.5" r="1.3" fill="#111"/><circle cx="213" cy="90.5" r="1.3" fill="#111"/>
 </svg>
</div>

<!-- THUMB 18 -->
<div class="a thumb" style="left:27px;top:596px;width:241px;height:182px;background:#fff">
 <svg class="a" style="left:0;top:0" width="241" height="182">
  <defs><clipPath id="c18"><rect x="10" y="13" width="219" height="154" rx="9"/></clipPath></defs>
  <g clip-path="url(#c18)">
   <rect x="10" y="13" width="219" height="154" fill="#c9c6f6"/>
   <rect x="24" y="13" width="44" height="107" fill="#fdf0df"/><rect x="98" y="13" width="45" height="107" fill="#fdf0df"/><rect x="163" y="13" width="45" height="107" fill="#fdf0df"/>
   <g fill="#f8e6cc"><rect x="27" y="57" width="9" height="60"/><rect x="36" y="70" width="8" height="47"/><rect x="52" y="55" width="14" height="62"/><rect x="120" y="66" width="20" height="50"/><rect x="166" y="66" width="18" height="50"/><rect x="186" y="90" width="20" height="26"/></g>
   <g stroke="#fff" stroke-width="1.5"><path d="M46 13 V120 M24 38 H68 M24 90 H68 M120 13 V120 M98 38 H143 M98 90 H143 M185 13 V120 M163 38 H208 M163 90 H208"/></g>
   
   <rect x="22" y="118" width="48" height="4" fill="#fff"/><rect x="161" y="118" width="48" height="4" fill="#fff"/>
   <rect x="10" y="138" width="219" height="30" fill="#aca8f3"/><rect x="10" y="136" width="219" height="2" fill="#e4e2fc"/>
   <rect x="193" y="40" width="23" height="68" rx="3" fill="#a9a4f6"/><rect x="193" y="40" width="23" height="15" rx="3" fill="#776fe0"/><rect x="193" y="98" width="23" height="10" rx="3" fill="#776fe0"/>
   <path d="M204 18 L197 40 M204 18 L211 40 M204 18 V40" stroke="#776fe0"/>
   <ellipse cx="120" cy="127" rx="32" ry="19" fill="none" stroke="#7670e0" stroke-width="1.5"/><ellipse cx="120" cy="127" rx="25" ry="15" fill="#7670e0"/>
   <path d="M90 131 V152 M150 131 V152 M120 146 V168" stroke="#7670e0" stroke-width="1.5"/>
   
   
   <path d="M70 86 L87 99 M70 104 L83 107 M158 62 L142 88 M163 80 L149 92" stroke="#fff" stroke-width="1.1"/>
   <path d="M92 30 L90 27 M102 24 L105 22" stroke="#222" stroke-width="1.6" stroke-linecap="round"/>
   <path d="M96 60 L90 68 L93 72 M122 58 L128 49" stroke="#6e5a9e" stroke-width="4.5" stroke-linecap="round" fill="none"/>
   <path d="M104 80 L101 92 M124 74 L132 82" stroke="#6e5a9e" stroke-width="6" stroke-linecap="round"/>
   <path d="M94 40 Q96 28 106 30 L118 32 Q122 36 120 48 L114 50 Q122 70 122 88 Q120 104 110 104 Q100 102 106 96 Q112 88 108 74 Q104 60 98 54 Q92 48 94 40Z" fill="#fd5b6d"/>
   <path d="M114 50 Q126 72 122 92 Q118 104 110 104 Q118 96 116 80 Q114 64 108 54Z" fill="#ffc21b"/>
   <path d="M100 50 Q108 56 116 50 Q112 62 100 50Z" fill="#8a1a2a"/>
   <path d="M92 38 L90 44 L93 48 L91 52Z" fill="#222"/>
   <circle cx="97" cy="36" r="4.6" fill="#fff" stroke="#6a57a3" stroke-width="1.6"/><circle cx="104" cy="33" r="4.6" fill="#fff" stroke="#6a57a3" stroke-width="1.6"/>
   <circle cx="97" cy="37" r="1.6" fill="#111"/><circle cx="104" cy="34" r="1.6" fill="#111"/>
   <circle cx="113" cy="31" r="2" fill="#fd5b6d"/><circle cx="117" cy="31" r="2" fill="#fd5b6d"/>
   <rect x="30" y="128" width="6" height="26" rx="2" fill="#e9ebfb"/><rect x="37" y="131" width="6" height="24" rx="2" fill="#e9ebfb"/><circle cx="28" cy="149" r="8.5" fill="#fff" stroke="#666" stroke-width=".8"/><circle cx="28" cy="149" r="2.8" fill="#333"/><circle cx="22" cy="146" r="1.8" fill="#333"/><circle cx="33" cy="153" r="1.8" fill="#333"/><circle cx="26" cy="156" r="1.5" fill="#333"/>
  </g>
 </svg>
</div>

<!-- THUMB 19 -->
<div class="a thumb" style="left:27px;top:790px;width:241px;height:182px;background:#fff">
 <svg class="a" style="left:0;top:0" width="240" height="181" viewBox="622 216 960 720"><use href="#slidecontent"/><g fill="none" stroke="#666" stroke-width="3"><use href="#strpaths"/></g></svg>
</div>
<!-- THUMB 20 partial -->
<div class="a" style="left:27px;top:986px;width:241px;height:17px;background:#ded9f7;border:1px solid #5e6470;border-bottom:none">
 <div class="a" style="left:9px;top:12px;width:219px;height:10px;background:#fff;border-radius:9px 9px 0 0"></div>
</div>
<!-- MAIN AREA -->
<div class="a" style="left:305px;top:170px;width:1595px;height:811px;overflow:hidden;background:linear-gradient(180deg,#a5c3ea 0%,#86a8d4 30%,#678dbf 58%,#557db2 76%,#5b84bd 88%,#6690cc 100%)">
 <svg class="a" style="left:0;top:0" width="200" height="40"><path d="M0 0 H168 L0 32Z" fill="rgba(255,255,255,.2)"/></svg>
</div>
<div class="a" style="left:304px;top:169px;width:1px;height:812px;background:#6a93cc"></div>
<div class="a" style="left:304px;top:169px;width:1596px;height:1px;background:#8fb1de"></div>
<!-- right scrollbar -->
<div class="a" style="left:1900px;top:170px;width:20px;height:811px;background:linear-gradient(90deg,#b9d3f5 0,#b9d3f5 7%,#8fabd6 7%,#8fabd6 22%,#7897c6 22%,#7b9bc8 100%)"></div>
<svg class="a" style="left:1903px;top:176px" width="14" height="8"><path d="M0.5 7.5 H13 L6.75 0.5Z" fill="#4e5778"/></svg>
<svg class="a" style="left:1903px;top:906px" width="14" height="8"><path d="M0.5 0.5 H13 L6.75 7.5Z" fill="#4e5778"/></svg>
<div class="a" style="left:1900px;top:919px;width:20px;height:62px;background:#a9c6ee"></div>
<svg class="a" style="left:1903px;top:921px" width="14" height="40"><path d="M1 0.5 H13" stroke="#222"/><path d="M2.5 9 H11.5 L7 4Z M2.5 15 H11.5 L7 10Z" fill="#111"/><path d="M2.5 26 H11.5 L7 31Z M2.5 32 H11.5 L7 37Z" fill="#111"/></svg>
<div class="a" style="left:1901px;top:555px;width:19px;height:20px;border:1px solid #4d5b7c;border-radius:2px;background:linear-gradient(90deg,#e9edf2 0,#f1f3f6 35%,#d5dbe3 50%,#c3ccd8 85%,#dfe4ea 100%)"></div>
<svg class="a" style="left:1906px;top:560px" width="10" height="9"><path d="M0 1 H8.5 M0 3 H8.5 M0 5 H8.5 M0 7 H8.5" stroke="#6b6f78" stroke-width=".9"/></svg>
<!-- splitter + notes -->
<div class="a" style="left:305px;top:981px;width:1615px;height:6px;background:linear-gradient(#e6f0fc 0,#e6f0fc 17%,#abd0fa 17%,#abd0fa 80%,#6e97cf 80%)"></div>
<div class="a" style="left:304px;top:987px;width:1596px;height:16px;background:#fff;overflow:hidden;border-left:1px solid #6e97cf">
 <div class="a t" style="left:12px;top:11px;font-size:22px;font-weight:bold;color:#111">Отметки новых знаний</div>
</div>
<div class="a" style="left:1900px;top:987px;width:20px;height:16px;background:linear-gradient(90deg,#b9d3f5 0,#b9d3f5 7%,#8fabd6 7%,#8fabd6 22%,#7897c6 22%,#7b9bc8 100%)"></div>
<svg class="a" style="left:1903px;top:989px" width="14" height="13"><path d="M1 5.5 H13 L7 0.5Z M1 7 H13 L7 12.5Z" fill="#4e5778"/></svg>

<!-- SLIDE -->
<div class="a" style="left:622px;top:216px;width:960px;height:720px;box-shadow:2px 2px 3px rgba(20,40,80,.45),5px 5px 12px rgba(20,40,80,.35)"></div>
<svg class="a" style="left:622px;top:216px" width="960" height="720" viewBox="622 216 960 720">
<g id="slidecontent">
 <rect x="622" y="216" width="960" height="720" fill="#fff"/>
 <rect x="660" y="264" width="886" height="623.5" rx="39" fill="#bdedfd"/>
 <rect x="763" y="278" width="678.5" height="578" fill="#728be8"/>
 <rect x="779" y="301" width="647" height="521.5" fill="#fff"/>
 <!-- strings -->
 <defs><g id="strpaths">
  <path d="M859.4 523 C857 535 853 545 855 555 C858 575 878 582 876 600 C874 615 860 620 862 633 C864 645 868 652 868.6 661"/>
  <path d="M945 518 C940 528 937 538 938.5 550 C941 565 951 578 950.5 595 C950 612 940 622 938 640 C935 665 936 690 936 718"/>
  <path d="M1033.5 523 C1028 533 1022 540 1022.5 552 C1023 568 1041 578 1039.5 592 C1038 610 1021 620 1021.5 638 C1022 655 1028 668 1032.5 683"/>
  <path d="M1136.7 523 C1135 533 1131 543 1132.5 553 C1135 572 1154 580 1153 595 C1152 610 1138 618 1139.3 632 C1140 645 1144 652 1145.5 661"/>
  <path d="M1222 511 C1218 520 1215 530 1216 540 C1218 558 1229 570 1228.5 585 C1228 600 1220 610 1218 625 C1214 650 1214 690 1213.8 712"/>
  <path d="M1339.5 516.7 C1334 525 1327 535 1328.5 545 C1330 560 1346 570 1345.5 582 C1345 598 1328 608 1327.5 625 C1327 645 1333 660 1338.7 674.7"/>
 </g></defs>
 <g fill="none" stroke="#555" stroke-width="1.1"><use href="#strpaths"/></g>
 <rect x="1296.5" y="395.5" width="95" height="129" fill="none" stroke="#5c4bd3" stroke-width="3"/>
 <!-- balloons -->
 <g id="bal">
 </g>
 <g transform="translate(856.5 459.5)">
  <path d="M1 45 L-3 48 H12 L9 45Z" fill="#6a2c91"/>
  <path d="M-2 48 L-4 57 Q-8 58 -8 60 Q3 66 14 61 L11 57 L10 48Z" fill="#3a80e0"/><path d="M-8 59 Q3 65 14 60.5 L14 62 Q3 67 -8 61Z" fill="#4f8ffe"/>
  <ellipse cx="0" cy="0" rx="38.5" ry="47.5" transform="rotate(-30)" fill="#4f8ffe"/>
  <ellipse cx="-26" cy="-23" rx="6.5" ry="9" fill="#94b9ff"/>
 </g>
 <g transform="translate(949 459.5)">
  <path d="M-1 44 L-4 48 H10 L8 44Z" fill="#6a2c91"/>
  <path d="M-3 48 L-7 56 Q-8 59 -5 60 Q4 65 12 62 L8 56 L8 48Z" fill="#36a51b"/><path d="M-7 57 Q3 64 12 61 L12 63 Q3 67 -7 59Z" fill="#45c024"/>
  <ellipse cx="0" cy="0" rx="36" ry="45.5" transform="rotate(-22)" fill="#45c024"/>
  <ellipse cx="-21" cy="-24" rx="6.5" ry="8.5" fill="#8fdb7d"/>
 </g>
 <g transform="translate(1038 459.5)">
  <path d="M4 45 L1 48 H14 L13 45Z" fill="#6a2c91"/>
  <path d="M2 48 L-2 57 Q-6 58 -5 60 Q6 66 17 62 L14 57 L14 48Z" fill="#e56a00"/><path d="M-5 59 Q6 65 17 61 L17 63 Q6 68 -5 61Z" fill="#f39605"/>
  <ellipse cx="0" cy="0" rx="38" ry="47.5" transform="rotate(-30)" fill="#f39605"/>
  <ellipse cx="-23" cy="-27" rx="6.5" ry="9" fill="#f6c06a"/>
 </g>
 <g transform="translate(1134 460)">
  <path d="M5 44 L2 47 H16 L14 44Z" fill="#6a2c91"/>
  <path d="M3 47 L-1 56 Q-5 57 -5 59 Q6 65 17 60 L14 56 L14 47Z" fill="#3a80e0"/><path d="M-5 58 Q6 64 17 59.5 L17 61 Q6 66 -5 60Z" fill="#4f8ffe"/>
  <ellipse cx="0" cy="0" rx="39" ry="47" transform="rotate(-30)" fill="#4f8ffe"/>
  <ellipse cx="-26" cy="-22" rx="6.5" ry="9" fill="#94b9ff"/>
 </g>
 <g transform="translate(1226 454)">
  <path d="M-1 43 L-4 47 H10 L8 43Z" fill="#6a2c91"/>
  <path d="M-3 47 L-7 55 Q-8 58 -5 59 Q4 64 12 61 L8 55 L8 47Z" fill="#36a51b"/><path d="M-7 56 Q3 63 12 60 L12 62 Q3 66 -7 58Z" fill="#45c024"/>
  <ellipse cx="0" cy="0" rx="36" ry="45" transform="rotate(-22)" fill="#45c024"/>
  <ellipse cx="-21" cy="-25" rx="6.5" ry="8.5" fill="#8fdb7d"/>
 </g>
 <!-- eraser -->
 <path d="M1260 787 Q1263 789 1266 791 Q1268 784 1274 785 Q1280 785 1281 791 Q1284 784 1289 785 Q1295 785 1296 791 Q1298 784 1304 785 Q1310 785 1311 791 Q1313 784 1319 785 Q1324 786 1325 791 Q1327 788 1328 786 V813 H1260Z" fill="#2fc1ab"/>
 <rect x="1260" y="813" width="68" height="13" fill="#03847f"/>
 <!-- RED DINO -->
 <g>
  <path d="M722 738 L701 752 L719 776 L701 792 L717 813 L701 828 L716 846Z" fill="#0d0f10"/>
  <path d="M723 728 Q740 722 760 724 L803 728 L828 752 Q829 790 826 822 L792 822 L782 888 L712 888 Q714 840 717 800 Q719 760 723 728Z" fill="#fe5f6f"/>
  <circle cx="814.5" cy="729" r="8.5" fill="#fe5f6f"/><circle cx="827" cy="744" r="7.5" fill="#fe5f6f"/>
  <ellipse cx="814" cy="732" rx="4" ry="6.5" transform="rotate(25 814 732)" fill="#0d0f10"/><ellipse cx="825.5" cy="745.5" rx="4" ry="5" transform="rotate(45 825.5 745.5)" fill="#0d0f10"/>
  <path d="M757 823 L794.6 824 L787 877 L755 866Z" fill="#fec304"/>
  <path d="M737.5 811 Q736 812 737 814 L746.5 830.8 L755 821 L762.3 833.3 L770.7 823.3 L778.5 836.5 L787.3 824.6 L794.6 825.2 L794.6 822.6Z" fill="#fff"/>
  <path d="M750 888 Q741 874 748 865 Q755 858 765 864 Q775 872 790 876 Q802 878 808 873 L809.5 866.5 L812 873 Q818 871 824 872 L819 880 L824 883 Q818 889 812 886 L810 888Z" fill="#6f5590"/>
  <ellipse cx="739.5" cy="716" rx="17.2" ry="25.3" fill="#6f5590"/><ellipse cx="772.6" cy="716" rx="17.4" ry="25.3" fill="#6f5590"/>
  <ellipse cx="741.6" cy="716.5" rx="12.8" ry="16.8" fill="#fff"/><ellipse cx="770.6" cy="716.5" rx="12.7" ry="16.8" fill="#fff"/>
  <ellipse cx="742.6" cy="709.6" rx="6" ry="7.7" fill="#0d0f10"/><ellipse cx="771.5" cy="709.3" rx="6" ry="7.7" fill="#0d0f10"/>
  <path d="M728.5 681.5 Q731 674 739 671.5" fill="none" stroke="#0d0f10" stroke-width="7" stroke-linecap="round"/>
  <path d="M774 672 Q781 675 784.5 682.5" fill="none" stroke="#0d0f10" stroke-width="7" stroke-linecap="round"/>
 </g>
 <!-- PURPLE DINO -->
 <g>
  <path d="M1462 702 Q1460 684 1473 686 Q1479 689 1477 704 Q1490 700 1490 712 Q1490 720 1486 728 Q1498 733 1496 744 Q1492 752 1484 758 L1468 745Z" fill="#201f86"/>
  <path d="M1397 715 Q1382 740 1381 768 Q1382 796 1404 800 Q1422 802 1441 790 L1437 888 L1520 888 C1506 862 1496 830 1490 790 Q1482 730 1460 700 L1430 690Z" fill="#b068d4"/>
  <path d="M1440 790 Q1446 784 1450 778 Q1452 835 1460 888 L1437 888Z" fill="#c484e8"/>
  <path d="M1437.5 769.5 Q1424 780 1416 798" fill="none" stroke="#fff" stroke-width="3.6" stroke-linecap="round"/>
  <ellipse cx="1389" cy="771" rx="2.6" ry="4.7" transform="rotate(-20 1389 771)" fill="#0d0f10"/><ellipse cx="1395.8" cy="768.5" rx="2.4" ry="4.5" transform="rotate(-5 1395.8 768.5)" fill="#0d0f10"/>
  <ellipse cx="1408" cy="700.7" rx="19" ry="26.7" fill="#6e35a5"/><ellipse cx="1442" cy="693.3" rx="19" ry="26.7" fill="#6e35a5"/>
  <ellipse cx="1409" cy="700.7" rx="13" ry="17" fill="#fff"/><ellipse cx="1441" cy="693.3" rx="13" ry="17.8" fill="#fff"/>
  <ellipse cx="1402.9" cy="699.3" rx="6.5" ry="8.5" fill="#0d0f10"/><ellipse cx="1435.2" cy="693" rx="6.3" ry="8" fill="#0d0f10"/>
  <path d="M1397.5 663 Q1402 658 1410 658" fill="none" stroke="#0d0f10" stroke-width="6.5" stroke-linecap="round"/>
  <path d="M1444.5 654.5 Q1452 657 1455.5 662.5" fill="none" stroke="#0d0f10" stroke-width="6.5" stroke-linecap="round"/>
  <path d="M1383 888 Q1384 884 1393 884.5 Q1394 880 1393.5 876 Q1400 880 1401 888Z" fill="#6e35a5"/>
 </g>
 <text x="1456" y="919" font-family="Liberation Sans" font-size="23.5" fill="#e7e1fb" stroke="#e7e1fb" stroke-width=".9" stroke-linejoin="round" textLength="89" lengthAdjust="spacingAndGlyphs">UCHi.RU</text>
</g>
</svg>
<!-- STATUS BAR -->
<div class="a" style="left:0;top:1003px;width:1920px;height:27px;background:linear-gradient(180deg,#6c93cb 0,#6c93cb 3.7%,#f4f8fe 3.7%,#f4f8fe 7.4%,#dfeafa 7.4%,#d5e4f7 40%,#c3d7f1 55%,#cfe0f6 85%,#dbe8f9 100%)"></div>
<div class="a t st" style="left:8px;top:1010px">Слайд 19 из 35</div>
<div class="a sbsep" style="left:105px"></div>
<div class="a t st" style="left:115px;top:1010px">"Simple Light"</div>
<div class="a sbsep" style="left:204px"></div>
<svg class="a" style="left:212px;top:1005px" width="22" height="20"><path d="M2 12 L12 8 L20 12 L10 17Z" fill="#e9eef6" stroke="#4a6aa8"/><path d="M2 12 L2 14 L10 19 L20 14 L20 12" fill="#6d8fd0" stroke="#4a6aa8"/><path d="M10 2 L19 10 M19 2 L10 10" stroke="#f03a2a" stroke-width="2.2"/></svg>
<div class="a t st" style="left:250px;top:1010px">Русский (Россия)</div>
<div class="a sbsep" style="left:356px"></div>
<!-- right side -->
<div class="a" style="left:1601px;top:1004px;width:319px;height:26px;background:linear-gradient(180deg,#e3edfa 0,#cfe0f6 45%,#bcd3f0 55%,#c9dcf4 100%)"></div><div class="a" style="left:1600px;top:1004px;width:2px;height:26px;border-left:1px solid #98b2d6;border-right:1px solid #f4f8fd"></div>
<div class="a" style="left:1607px;top:1005px;width:70px;height:24px;border:1px solid #a3bde3;border-radius:2px;background:linear-gradient(#e9f1fb,#cddff5)"></div>
<div class="a" style="left:1608px;top:1006px;width:22px;height:22px;background:linear-gradient(#fde7a9,#fbd26c 50%,#f9c24a 51%,#fddb8a)"></div>
<div class="a" style="left:1630px;top:1006px;width:1px;height:22px;background:#b5c9e6"></div>
<div class="a" style="left:1653px;top:1006px;width:1px;height:22px;background:#b5c9e6"></div>
<svg class="a" style="left:1611px;top:1009px" width="16" height="15"><rect x="1" y="1" width="13" height="12" fill="#fff" stroke="#333" stroke-width="2"/><rect x="2" y="2" width="3" height="10" fill="#444"/><rect x="7" y="4" width="5" height="4" fill="#888"/></svg>
<svg class="a" style="left:1634px;top:1010px" width="16" height="14"><g fill="none" stroke="#444" stroke-width="1.6"><rect x="1" y="1" width="5" height="3"/><rect x="9" y="1" width="5" height="3"/><rect x="1" y="8" width="5" height="3"/><rect x="9" y="8" width="5" height="3"/></g></svg>
<svg class="a" style="left:1657px;top:1009px" width="16" height="16"><path d="M1 2 H15 V4 H1Z M3 4 H13 V9 H3Z" fill="#444"/><rect x="5" y="5" width="6" height="3" fill="#ddd"/><path d="M8 9 V13 M5 14 H11" stroke="#444" stroke-width="2"/></svg>
<div class="a t st" style="left:1685px;top:1010px">80%</div>
<svg class="a" style="left:1718px;top:1006px" width="22" height="22"><circle cx="11" cy="11" r="9.5" fill="url(#zg)" stroke="#5b77a8"/><path d="M6 11 H16" stroke="#3c4f78" stroke-width="2"/><defs><radialGradient id="zg" cx="50%" cy="30%" r="70%"><stop offset="0" stop-color="#fff"/><stop offset="1" stop-color="#c8d6ea"/></radialGradient></defs></svg>
<div class="a" style="left:1741px;top:1016px;width:124px;height:2px;background:#8da6c9;border-bottom:1px solid #fff"></div>
<div class="a" style="left:1802px;top:1013px;width:1px;height:8px;background:#8da6c9"></div>
<svg class="a" style="left:1783px;top:1007px" width="13" height="18"><path d="M1 1 H12 V11 L6.5 17 L1 11Z" fill="#f2f5fa" stroke="#5b77a8"/><path d="M6.5 4 V12" stroke="#9ab"/></svg>
<svg class="a" style="left:1865px;top:1006px" width="22" height="22"><circle cx="11" cy="11" r="9.5" fill="url(#zg)" stroke="#5b77a8"/><path d="M6 11 H16 M11 6 V16" stroke="#3c4f78" stroke-width="2"/></svg>
<svg class="a" style="left:1895px;top:1006px" width="21" height="21"><rect x="0.5" y="0.5" width="19" height="19" rx="2" fill="#eef3fa" stroke="#8ea8cc"/><rect x="3.5" y="3.5" width="13" height="13" fill="none" stroke="#777" stroke-dasharray="1 1"/><path d="M10 2 V8 M10 12 V18 M2 10 H8 M12 10 H18" stroke="#333" stroke-width=".9"/><path d="M8.5 6 L10 8 L11.5 6 M8.5 14 L10 12 L11.5 14 M6 8.5 L8 10 L6 11.5 M14 8.5 L12 10 L14 11.5" fill="none" stroke="#333" stroke-width=".9"/></svg>

<!-- TASKBAR -->
<div class="a" style="left:0;top:1030px;width:1920px;height:50px;background:#1f1f21"></div>
<svg class="a" style="left:20px;top:1045px" width="20" height="20"><path d="M0 2.8 L8.2 1.7 V9.5 H0Z M9.2 1.5 L20 0 V9.5 H9.2Z M0 10.5 H8.2 V18.3 L0 17.2Z M9.2 10.5 H20 V20 L9.2 18.5Z" fill="#fff"/></svg>
<!-- items -->
<div class="a tbu" style="left:69px;width:165px"></div>
<div class="a tbu" style="left:244px;width:165px"></div>
<div class="a tbu" style="left:418px;width:165px"></div>
<div class="a tbu" style="left:591px;width:165px"></div>
<div class="a tbu" style="left:766px;width:164px"></div>
<div class="a tbu" style="left:940px;width:164px"></div>
<div class="a tbu" style="left:1114px;width:164px"></div>
<div class="a" style="left:1283px;top:1030px;width:173px;height:50px;background:#3d3d3e"></div>
<div class="a tbu" style="left:1283px;width:173px"></div>
<div class="a tbu" style="left:1461px;width:164px"></div>
<div class="a t tbt" style="left:110px">Радио Шокола...</div>
<div class="a t tbt" style="left:285px">универсальны...</div>
<div class="a t tbt" style="left:459px">phpUx5HTB_Za...</div>
<div class="a t tbt" style="left:632px">Конспект урок...</div>
<div class="a t tbt" style="left:807px">открытый урок</div>
<div class="a t tbt" style="left:981px">Математика 1 ...</div>
<div class="a t tbt" style="left:1155px">Математика. 1к...</div>
<div class="a t tbt" style="left:1329px">Закономернос...</div>
<div class="a t tbt" style="left:1502px">27. Число 10 .р...</div>
<!-- firefox -->
<svg class="a" style="left:76px;top:1040px" width="30" height="30"><defs><radialGradient id="ff" cx="60%" cy="20%" r="90%"><stop offset="0" stop-color="#ffe14a"/><stop offset=".45" stop-color="#ff7a1a"/><stop offset="1" stop-color="#e3213f"/></radialGradient></defs><circle cx="15" cy="16.5" r="13" fill="url(#ff)"/><path d="M19 2 Q26 6 27 14 L20 10Z" fill="#ffb02e"/><circle cx="15" cy="17" r="7" fill="#7b3fd6"/><path d="M6 12 Q12 8 18 12 Q14 13 12 15Z" fill="#ffcf3a"/></svg>
<!-- word docs -->
<svg class="a wd" style="left:251px;top:1041px" width="30" height="29"><use href="#worddoc"/></svg>
<svg class="a wd" style="left:425px;top:1041px" width="30" height="29"><use href="#worddoc"/></svg>
<svg class="a wd" style="left:598px;top:1041px" width="30" height="29"><use href="#worddoc"/></svg>
<svg width="0" height="0" style="position:absolute"><defs>
<g id="worddoc"><path d="M6 1.5 H21 L27 7.5 V28 H6Z" fill="#f4f7fb" stroke="#9fb0c8"/><path d="M21 1.5 V7.5 H27" fill="#dfe6f0" stroke="#9fb0c8"/><path d="M11 13 H24 M11 16 H24 M11 19 H24 M11 22 H24 M11 25 H24" stroke="#8fa8d0"/><rect x="1" y="5" width="11" height="9" fill="#2e5fb8"/><rect x="3" y="7" width="6" height="5" fill="#cfe0ff"/><rect x="17" y="8" width="6" height="5" fill="#cfe0ff"/></g>
<g id="pptdoc"><path d="M6 1.5 H21 L27 7.5 V28 H6Z" fill="#f4f7fb" stroke="#9fb0c8"/><path d="M21 1.5 V7.5 H27" fill="#dfe6f0" stroke="#9fb0c8"/><path d="M11 14 H24 M11 17 H24 M11 20 H24 M11 23 H24 M11 26 H24" stroke="#8fa8d0"/><rect x="1" y="4" width="13" height="10" rx="2" fill="#e35a2a"/><rect x="4" y="6" width="7" height="5" fill="#ffe0c8"/></g>
<g id="folder"><path d="M3 4 H11 L13 7 V27 L3 25Z" fill="#e3b83a"/><path d="M6 7 L25 7 V27 H13 L6 25Z" fill="#f8d777"/><path d="M13 7 V27" stroke="#d9a828"/></g>
</defs></svg>
<svg class="a" style="left:772px;top:1041px" width="30" height="29"><use href="#folder"/></svg>
<svg class="a" style="left:946px;top:1041px" width="30" height="29"><use href="#folder"/></svg>
<svg class="a" style="left:1120px;top:1041px" width="30" height="29"><path d="M8 2.5 H22 L27 7.5 V28 H8Z" fill="#fff" stroke="#bbb"/><rect x="1" y="3" width="14" height="7" fill="#c9252c"/><text x="2.5" y="9" font-size="6" font-weight="bold" fill="#fff" font-family="Liberation Sans">PDF</text><path d="M12 25 Q15 14 17 11 Q20 16 24 23 Q17 20 12 25Z" fill="none" stroke="#d4272e" stroke-width="2"/></svg>
<svg class="a" style="left:1294px;top:1041px" width="30" height="29"><use href="#pptdoc"/></svg>
<svg class="a" style="left:1468px;top:1041px" width="30" height="29"><use href="#pptdoc"/></svg>
<!-- tray -->
<svg class="a" style="left:1637px;top:1044px" width="22" height="22"><rect x="1" y="1" width="20" height="20" rx="3" fill="#3a8ad8" stroke="#7fc0f0"/><rect x="4" y="4" width="14" height="14" fill="#5aa6e8"/><path d="M6 7 H16 M6 10 H16 M8 13 H14" stroke="#e8f4ff"/></svg>
<svg class="a" style="left:1667px;top:1046px" width="22" height="18"><rect x="3.5" y="3.5" width="17" height="10" fill="none" stroke="#fff"/><path d="M1 1 V8 M12 13.5 V17 M7 17.5 H17" stroke="#fff"/></svg>
<svg class="a" style="left:1697px;top:1046px" width="22" height="18"><path d="M1 6 H5 L10 1.5 V16.5 L5 12 H1Z" fill="none" stroke="#fff"/><path d="M13 6 Q15 9 13 12 M16 3.5 Q20 9 16 14.5" fill="none" stroke="#aaa"/></svg>
<div class="a t" style="left:1732px;top:1048px;font-size:14.5px;color:#fff">РУС</div>
<div class="a t" style="left:1793px;top:1035px;font-size:14.5px;color:#fff">19:25</div>
<div class="a t" style="left:1777px;top:1059px;font-size:14.5px;color:#fff">16.12.2024</div>
<svg class="a" style="left:1867px;top:1044px" width="24" height="22"><path d="M1.5 1.5 H22.5 V17.5 H8 L3 21 V17.5 H1.5Z" fill="none" stroke="#fff" stroke-width="1.2"/><path d="M15 14 Q19 14 19 10" fill="none" stroke="#fff"/></svg>
</body></html>
